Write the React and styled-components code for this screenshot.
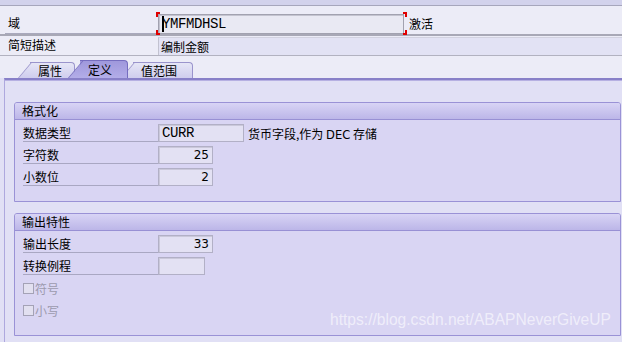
import React from "react";
import styled, { createGlobalStyle } from "styled-components";

const GlobalStyle = createGlobalStyle`
  html, body { margin: 0; padding: 0; background: #e1e0f5; }
  * { box-sizing: border-box; }
`;

const Page = styled.div`
  position: relative;
  width: 622px;
  height: 342px;
  overflow: hidden;
  background: #e1e0f5;
  font-family: "Noto Sans CJK SC", "Noto Sans", sans-serif;
  font-size: 12px;
  color: #000;
`;

const TopBand = styled.div`
  height: 6px;
  background: #d2d2ec;
  border-bottom: 1px solid #a6a6bc;
`;

const Header = styled.div`
  background: #ececf7;
`;

const KeyRow = styled.div`
  display: flex;
  align-items: flex-end;
  height: 30px;
  border-bottom: 2px solid #a8a8b6;
`;

const DescRow = styled.div`
  display: flex;
  align-items: stretch;
  height: 20px;
  border-bottom: 1px solid #b2b2c0;
`;

const HeadLabel = styled.div`
  width: 153px;
  margin-left: 5px;
  padding-left: 3px;
  height: ${(p) => p.$h}px;
  line-height: ${(p) => p.$h - 2}px;
  border-bottom: ${(p) => (p.$line ? "1px solid #a9a9bd" : "none")};
  white-space: nowrap;
`;

const FieldWrap = styled.div`
  position: relative;
  display: flex;
  align-items: flex-end;
`;

const KeyField = styled.div`
  width: 246px;
  height: 20px;
  background: #e9e9f3;
  border: 1px solid #a2a2b0;
  box-shadow: inset 1px 1px 0 #c4c4d0;
  padding-left: 3px;
  font-family: "Liberation Mono", "DejaVu Sans Mono", monospace;
  font-size: 14px;
  line-height: 18px;
  letter-spacing: -0.4px;
`;

const Corner = styled.span`
  position: absolute;
  width: 4px;
  height: 5px;
  border-color: #e00000;
  border-style: solid;
  border-width: 0;
  ${(p) => (p.$left ? "left: -2px;" : "right: -3px;")}
  ${(p) => (p.$top ? "top: -2px;" : "bottom: -1px;")}
  ${(p) => (p.$left ? "border-left-width: 2px;" : "border-right-width: 2px;")}
  ${(p) => (p.$top ? "border-top-width: 2px;" : "border-bottom-width: 2px;")}
`;

const Caret = styled.span`
  position: absolute;
  left: 4px;
  top: 2px;
  width: 2px;
  height: 16px;
  background: #000;
`;

const AfterText = styled.div`
  margin-left: 5px;
  height: 20px;
  line-height: 20px;
`;

const DescField = styled.div`
  flex: 1;
  margin-top: 1px;
  background: #e2e2f4;
  border-left: 1px solid #c2c2d0;
  border-top: 1px solid #d2d2e0;
  padding-left: 2px;
  line-height: 17px;
`;

const TabStrip = styled.div`
  display: flex;
  align-items: flex-end;
  height: 22px;
  padding-left: 18px;
  background: #ececf7;
`;

const inactiveGrad = "linear-gradient(#e6e6f6, #cfcdee)";
const activeGrad = "linear-gradient(#9f98dc, #b3ade8)";

const Tab = styled.div`
  position: relative;
  z-index: ${(p) => (p.$active ? 3 : 1)};
  width: ${(p) => p.$w}px;
  height: ${(p) => (p.$active ? 18 : 16)}px;
  margin-left: ${(p) => (p.$first ? 0 : -7)}px;
  padding-left: 20px;
  display: flex;
  align-items: center;
  padding-top: 1px;
  white-space: nowrap;
  &::before {
    content: "";
    position: absolute;
    top: 0;
    bottom: 0;
    left: 12px;
    right: 0;
    background: ${(p) => (p.$active ? activeGrad : inactiveGrad)};
    border-top: 1px solid ${(p) => (p.$active ? "#756dbf" : "#9a94cc")};
    border-right: 1px solid ${(p) => (p.$active ? "#756dbf" : "#9a94cc")};
    border-top-right-radius: 4px;
    z-index: -1;
  }
  &::after {
    content: "";
    position: absolute;
    top: 0;
    bottom: 0;
    left: 0;
    width: 18px;
    background: ${(p) => (p.$active ? activeGrad : inactiveGrad)};
    border-top: 1px solid ${(p) => (p.$active ? "#756dbf" : "#9a94cc")};
    border-left: 1px solid ${(p) => (p.$active ? "#756dbf" : "#9a94cc")};
    transform: skewX(-40deg);
    transform-origin: bottom left;
    z-index: -1;
  }
`;

const Panel = styled.div`
  margin-left: 4px;
  border-left: 1px solid #aea8de;
  border-top: 2px solid #8880c8;
  box-shadow: inset 0 1px 0 #b6b0e2;
  padding: 22px 1px 20px 9px;
  display: flex;
  flex-direction: column;
  gap: 11px;
`;

const Group = styled.div`
  border: 1px solid #9a92d6;
  border-radius: 3px 3px 0 0;
  background: #d9d5f3;
`;

const GroupHead = styled.div`
  height: 17px;
  line-height: 16px;
  padding-left: 7px;
  background: linear-gradient(#d8d4f5, #bcb6e8);
  border-bottom: 1px solid #9890d4;
  border-radius: 2px 2px 0 0;
`;

const GroupBody = styled.div`
  display: flex;
  flex-direction: column;
  gap: 4px;
  padding: 4px 0 ${(p) => p.$pb}px 8px;
`;

const Row = styled.div`
  display: flex;
  align-items: center;
  height: 18px;
`;

const Label = styled.div`
  width: 135px;
  height: 18px;
  line-height: 17px;
  border-bottom: 1px solid #a9a7c2;
  white-space: nowrap;
`;

const Input = styled.div`
  width: ${(p) => p.$w}px;
  height: 18px;
  background: #e3e1f3;
  border: 1px solid #b2b0c6;
  box-shadow: inset 1px 1px 0 #cac8da;
  padding: 0 3px;
  text-align: ${(p) => (p.$num ? "right" : "left")};
  font-family: ${(p) =>
    p.$num
      ? '"DejaVu Sans", "Noto Sans", sans-serif'
      : '"Liberation Mono", "DejaVu Sans Mono", monospace'};
  font-size: ${(p) => (p.$num ? 12 : 14)}px;
  letter-spacing: ${(p) => (p.$num ? 0 : -0.4)}px;
  line-height: 16px;
`;

const Note = styled.div`
  margin-left: 4px;
  white-space: nowrap;
`;

const Latin = styled.span`
  font-family: "DejaVu Sans", sans-serif;
  font-size: 11.5px;
`;

const CheckRow = styled.div`
  display: flex;
  align-items: center;
  height: 18px;
  color: #9c9aae;
`;

const Box = styled.span`
  width: 11px;
  height: 11px;
  border: 1px solid #a4a2b6;
  background: #e2e0f0;
  margin-right: 1px;
`;

const Watermark = styled.div`
  position: absolute;
  left: 330px;
  top: 310px;
  font-family: "Liberation Sans", Arial, sans-serif;
  font-size: 15.6px;
  line-height: 20px;
  color: rgba(255, 255, 255, 0.6);
  white-space: nowrap;
  pointer-events: none;
`;

export default function App() {
  return (
    <Page>
      <GlobalStyle />
      <TopBand />
      <Header>
        <KeyRow>
          <HeadLabel $h={20} $line>域</HeadLabel>
          <FieldWrap>
            <KeyField>YMFMDHSL</KeyField>
            <Caret />
            <Corner $left $top />
            <Corner $left />
            <Corner $top />
            <Corner />
          </FieldWrap>
          <AfterText>激活</AfterText>
        </KeyRow>
        <DescRow>
          <HeadLabel $h={20}>简短描述</HeadLabel>
          <DescField>编制金额</DescField>
        </DescRow>
      </Header>
      <TabStrip>
        <Tab $first $w={57}>属性</Tab>
        <Tab $active $w={60}>定义</Tab>
        <Tab $w={72}>值范围</Tab>
      </TabStrip>
      <Panel>
        <Group>
          <GroupHead>格式化</GroupHead>
          <GroupBody $pb={15}>
            <Row>
              <Label>数据类型</Label>
              <Input $w={86}>CURR</Input>
              <Note>
                货币字段,作为 <Latin>DEC</Latin> 存储
              </Note>
            </Row>
            <Row>
              <Label>字符数</Label>
              <Input $w={55} $num>25</Input>
            </Row>
            <Row>
              <Label>小数位</Label>
              <Input $w={55} $num>2</Input>
            </Row>
          </GroupBody>
        </Group>
        <Group>
          <GroupHead>输出特性</GroupHead>
          <GroupBody $pb={16}>
            <Row>
              <Label>输出长度</Label>
              <Input $w={55} $num>33</Input>
            </Row>
            <Row>
              <Label>转换例程</Label>
              <Input $w={47} />
            </Row>
            <CheckRow>
              <Box />
              符号
            </CheckRow>
            <CheckRow>
              <Box />
              小写
            </CheckRow>
          </GroupBody>
        </Group>
      </Panel>
      <Watermark>https://blog.csdn.net/ABAPNeverGiveUP</Watermark>
    </Page>
  );
}
